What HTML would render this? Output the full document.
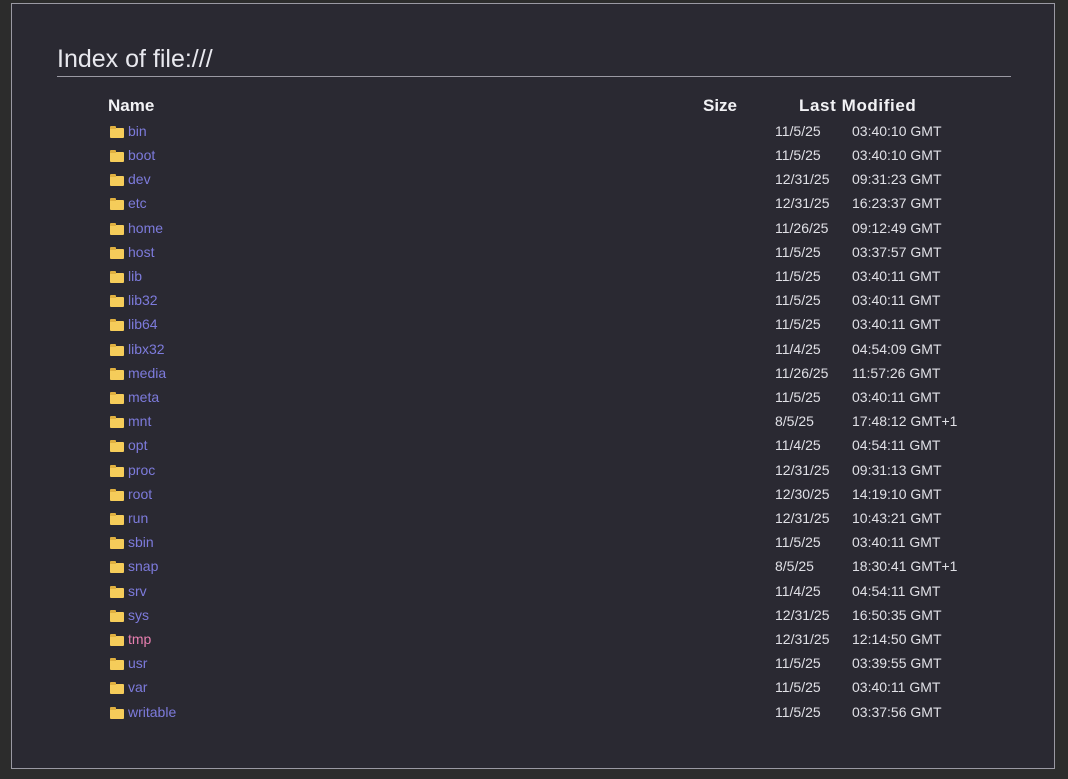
<!DOCTYPE html>
<html><head><meta charset="utf-8"><style>
html,body{margin:0;padding:0;width:1068px;height:779px;background:#2c2c2c;overflow:hidden;font-family:"Liberation Sans","DejaVu Sans",sans-serif;}
.frame{position:absolute;left:11px;top:3px;width:1042px;height:764px;border:1px solid #9a99a3;background:#2a2932;}
h1{position:absolute;left:45px;top:40px;margin:0;width:954px;font-weight:300;font-size:25px;color:#e8e8ee;border-bottom:1px solid #9a99a3;padding-bottom:2px;line-height:30px;}
.hdr{position:absolute;top:92px;font-weight:bold;font-size:17px;color:#f2f2f5;}
#rows{position:absolute;left:0;top:-3px;width:100%;height:100%;}
.row{position:absolute;left:0;height:24px;font-size:14px;line-height:24px;}
.row .ic{position:absolute;left:98px;top:9px;width:14px;height:10px;background:#f5cc5a;border-radius:1px;}
.row .ic:before{content:"";position:absolute;left:0;top:-2px;width:6px;height:3px;background:#e0b040;border-radius:1px 1px 0 0;}
.row .n{position:absolute;left:116px;color:#7d7bdc;}
.row .d{position:absolute;left:763px;color:#e0e0e6;}
.row .t{position:absolute;left:840px;color:#e0e0e6;white-space:nowrap;}
</style></head><body><div class="frame">
<h1>Index of file:///</h1>
<div class="hdr" style="left:96px">Name</div>
<div class="hdr" style="left:691px">Size</div>
<div class="hdr" style="left:787px;letter-spacing:0.6px">Last Modified</div>
<div id="rows">
<div class="row" style="top:118px"><span class="ic"></span><span class="n">bin</span><span class="d">11/5/25</span><span class="t">03:40:10 GMT</span></div>
<div class="row" style="top:142px"><span class="ic"></span><span class="n">boot</span><span class="d">11/5/25</span><span class="t">03:40:10 GMT</span></div>
<div class="row" style="top:166px"><span class="ic"></span><span class="n">dev</span><span class="d">12/31/25</span><span class="t">09:31:23 GMT</span></div>
<div class="row" style="top:190px"><span class="ic"></span><span class="n">etc</span><span class="d">12/31/25</span><span class="t">16:23:37 GMT</span></div>
<div class="row" style="top:215px"><span class="ic"></span><span class="n">home</span><span class="d">11/26/25</span><span class="t">09:12:49 GMT</span></div>
<div class="row" style="top:239px"><span class="ic"></span><span class="n">host</span><span class="d">11/5/25</span><span class="t">03:37:57 GMT</span></div>
<div class="row" style="top:263px"><span class="ic"></span><span class="n">lib</span><span class="d">11/5/25</span><span class="t">03:40:11 GMT</span></div>
<div class="row" style="top:287px"><span class="ic"></span><span class="n">lib32</span><span class="d">11/5/25</span><span class="t">03:40:11 GMT</span></div>
<div class="row" style="top:311px"><span class="ic"></span><span class="n">lib64</span><span class="d">11/5/25</span><span class="t">03:40:11 GMT</span></div>
<div class="row" style="top:336px"><span class="ic"></span><span class="n">libx32</span><span class="d">11/4/25</span><span class="t">04:54:09 GMT</span></div>
<div class="row" style="top:360px"><span class="ic"></span><span class="n">media</span><span class="d">11/26/25</span><span class="t">11:57:26 GMT</span></div>
<div class="row" style="top:384px"><span class="ic"></span><span class="n">meta</span><span class="d">11/5/25</span><span class="t">03:40:11 GMT</span></div>
<div class="row" style="top:408px"><span class="ic"></span><span class="n">mnt</span><span class="d">8/5/25</span><span class="t">17:48:12 GMT+1</span></div>
<div class="row" style="top:432px"><span class="ic"></span><span class="n">opt</span><span class="d">11/4/25</span><span class="t">04:54:11 GMT</span></div>
<div class="row" style="top:457px"><span class="ic"></span><span class="n">proc</span><span class="d">12/31/25</span><span class="t">09:31:13 GMT</span></div>
<div class="row" style="top:481px"><span class="ic"></span><span class="n">root</span><span class="d">12/30/25</span><span class="t">14:19:10 GMT</span></div>
<div class="row" style="top:505px"><span class="ic"></span><span class="n">run</span><span class="d">12/31/25</span><span class="t">10:43:21 GMT</span></div>
<div class="row" style="top:529px"><span class="ic"></span><span class="n">sbin</span><span class="d">11/5/25</span><span class="t">03:40:11 GMT</span></div>
<div class="row" style="top:553px"><span class="ic"></span><span class="n">snap</span><span class="d">8/5/25</span><span class="t">18:30:41 GMT+1</span></div>
<div class="row" style="top:578px"><span class="ic"></span><span class="n">srv</span><span class="d">11/4/25</span><span class="t">04:54:11 GMT</span></div>
<div class="row" style="top:602px"><span class="ic"></span><span class="n">sys</span><span class="d">12/31/25</span><span class="t">16:50:35 GMT</span></div>
<div class="row" style="top:626px"><span class="ic"></span><span class="n" style="color:#e87fb0">tmp</span><span class="d">12/31/25</span><span class="t">12:14:50 GMT</span></div>
<div class="row" style="top:650px"><span class="ic"></span><span class="n">usr</span><span class="d">11/5/25</span><span class="t">03:39:55 GMT</span></div>
<div class="row" style="top:674px"><span class="ic"></span><span class="n">var</span><span class="d">11/5/25</span><span class="t">03:40:11 GMT</span></div>
<div class="row" style="top:699px"><span class="ic"></span><span class="n">writable</span><span class="d">11/5/25</span><span class="t">03:37:56 GMT</span></div>
</div>
</div></body></html>
